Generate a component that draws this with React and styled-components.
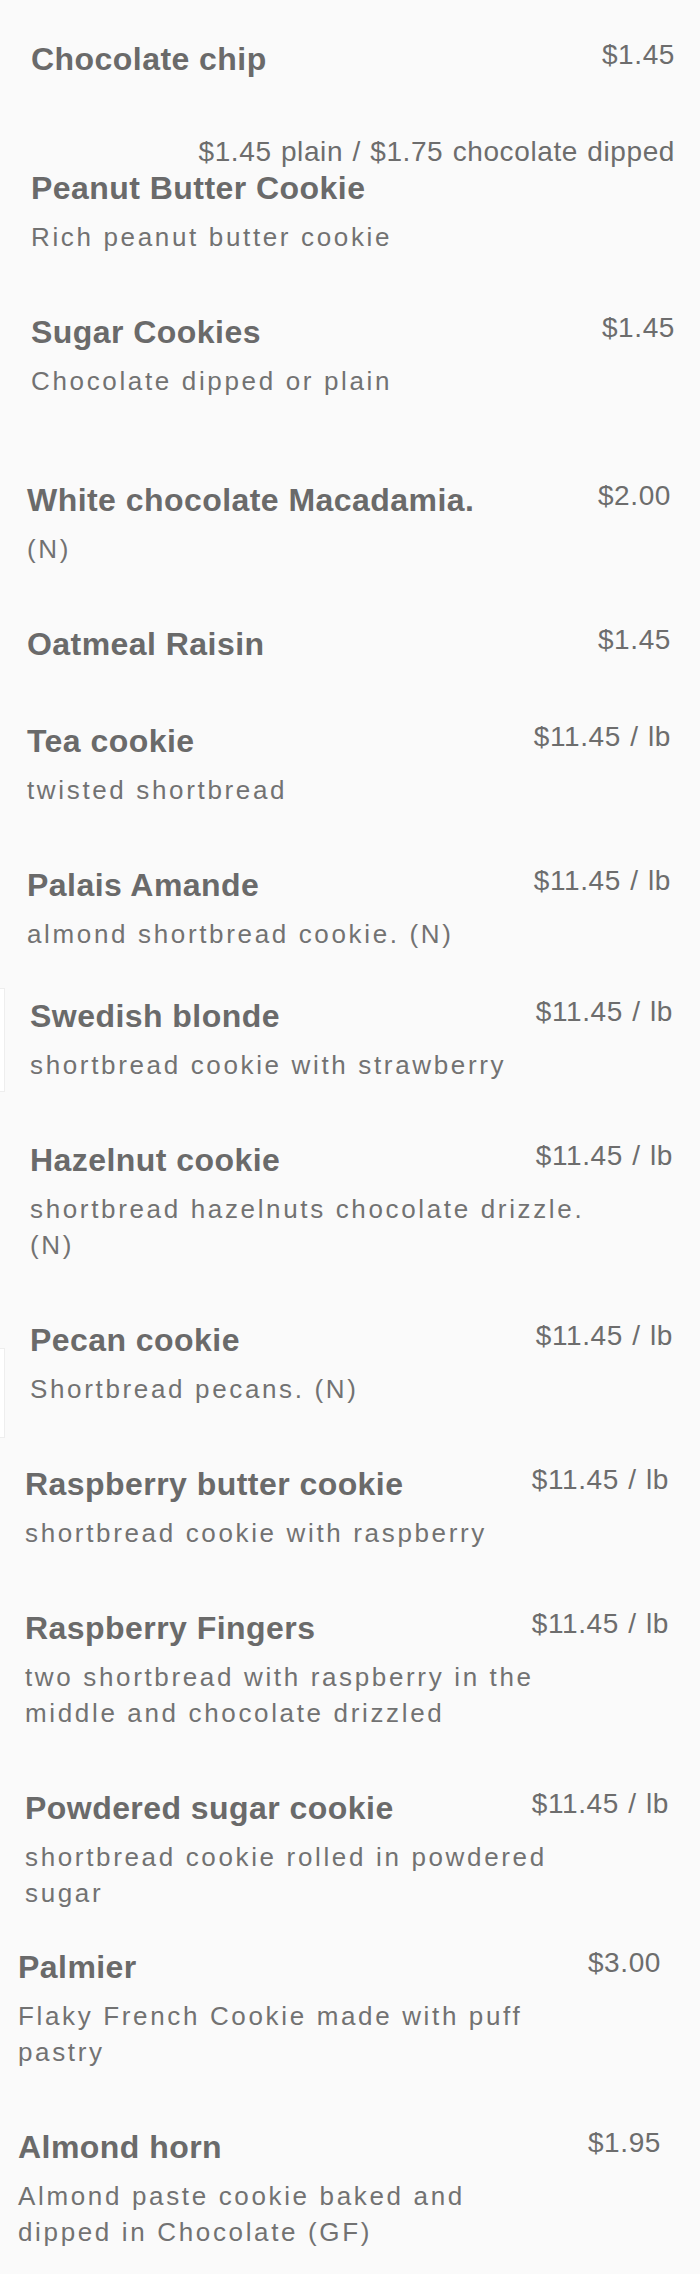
import React from "react";
import styled, { createGlobalStyle } from "styled-components";

const GlobalStyle = createGlobalStyle`
  html, body {
    margin: 0;
    background: #fafafa;
  }

  body {
    font-family: "Liberation Sans", Arial, sans-serif;
    color: #6b6b6b;
  }
`;

const Menu = styled.ul`
  list-style: none;
  margin: 0;
  padding: 39px 0 24px;

  display: flex;
  flex-direction: column;
  gap: 57px;
`;

const Item = styled.li`
  display: flex;
  margin-top: ${({ $shift }) => $shift || 0}px;
`;

/* faint white card edge peeking in on the left */
const Edge = styled.div`
  flex: none;
  align-self: flex-start;
  width: 5px;
  height: ${({ $height }) => $height}px;
  margin: ${({ $top }) => $top}px -5px ${({ $top, $height }) => -($top + $height)}px 0;
  box-sizing: border-box;
  background: #ffffff;
  border: 1px solid #eeeeee;
  border-left: 0;
`;

const Body = styled.div`
  flex: 1;
  min-width: 0;
  padding: 0 ${({ $right }) => $right}px 0 ${({ $left }) => $left}px;
`;

const Head = styled.div`
  display: flex;
  flex-wrap: wrap-reverse;
  align-items: flex-end;
  column-gap: 16px;
`;

const Name = styled.h3`
  margin: 0;
  font-size: 32px;
  line-height: 40px;
  font-weight: 700;
  letter-spacing: 0.45px;
  color: #6a6a6a;
  white-space: nowrap;
`;

const Price = styled.span`
  margin-left: auto;
  font-size: 28px;
  line-height: 32px;
  letter-spacing: 0.6px;
  word-spacing: 1px;
  color: #6d6d6d;
  white-space: nowrap;
`;

const Desc = styled.p`
  margin: 11px 0 0;
  max-width: ${({ $width }) => $width}px;
  font-size: 26px;
  line-height: 36px;
  letter-spacing: 2.65px;
  color: #727272;
`;

const A = { left: 31, right: 25 };
const B = { left: 27, right: 29 };
const C = { left: 30, right: 27 };
const D = { left: 25, right: 31 };
const E = { left: 18, right: 39 };

const LB = "$11.45 / lb";

const cookies = [
  { name: "Chocolate chip", price: "$1.45", inset: A },
  {
    name: "Peanut Butter Cookie",
    price: "$1.45 plain / $1.75 chocolate dipped",
    desc: "Rich peanut butter cookie",
    inset: A
  },
  {
    name: "Sugar Cookies",
    price: "$1.45",
    desc: "Chocolate dipped or plain",
    inset: A
  },
  {
    name: "White chocolate Macadamia.",
    price: "$2.00",
    desc: "(N)",
    inset: B,
    shift: 24
  },
  { name: "Oatmeal Raisin", price: "$1.45", inset: B },
  { name: "Tea cookie", price: LB, desc: "twisted shortbread", inset: B },
  {
    name: "Palais Amande",
    price: LB,
    desc: "almond shortbread cookie. (N)",
    inset: B
  },
  {
    name: "Swedish blonde",
    price: LB,
    desc: "shortbread cookie with strawberry",
    inset: C,
    shift: -13,
    edge: { top: -8, height: 104 }
  },
  {
    name: "Hazelnut cookie",
    price: LB,
    desc: "shortbread hazelnuts chocolate drizzle. (N)",
    inset: C,
    descWidth: 575
  },
  {
    name: "Pecan cookie",
    price: LB,
    desc: "Shortbread pecans. (N)",
    inset: C,
    edge: { top: 28, height: 90 }
  },
  {
    name: "Raspberry butter cookie",
    price: LB,
    desc: "shortbread cookie with raspberry",
    inset: D
  },
  {
    name: "Raspberry Fingers",
    price: LB,
    desc: "two shortbread with raspberry in the middle and chocolate drizzled",
    inset: D
  },
  {
    name: "Powdered sugar cookie",
    price: LB,
    desc: "shortbread cookie rolled in powdered sugar",
    inset: D
  },
  {
    name: "Palmier",
    price: "$3.00",
    desc: "Flaky French Cookie made with puff pastry",
    inset: E,
    shift: -21,
    descWidth: 530
  },
  {
    name: "Almond horn",
    price: "$1.95",
    desc: "Almond paste cookie baked and dipped in Chocolate (GF)",
    inset: E,
    descWidth: 530
  }
];

const MenuItem = ({ data }) => (
  <Item $shift={data.shift}>
    {data.edge && <Edge $top={data.edge.top} $height={data.edge.height} />}
    <Body $left={data.inset.left} $right={data.inset.right}>
      <Head>
        <Name>{data.name}</Name>
        <Price>{data.price}</Price>
      </Head>
      {data.desc && <Desc $width={data.descWidth || 560}>{data.desc}</Desc>}
    </Body>
  </Item>
);

const App = () => (
  <>
    <GlobalStyle />
    <Menu>
      {cookies.map(c => (
        <MenuItem key={c.name} data={c} />
      ))}
    </Menu>
  </>
);

export default App;
